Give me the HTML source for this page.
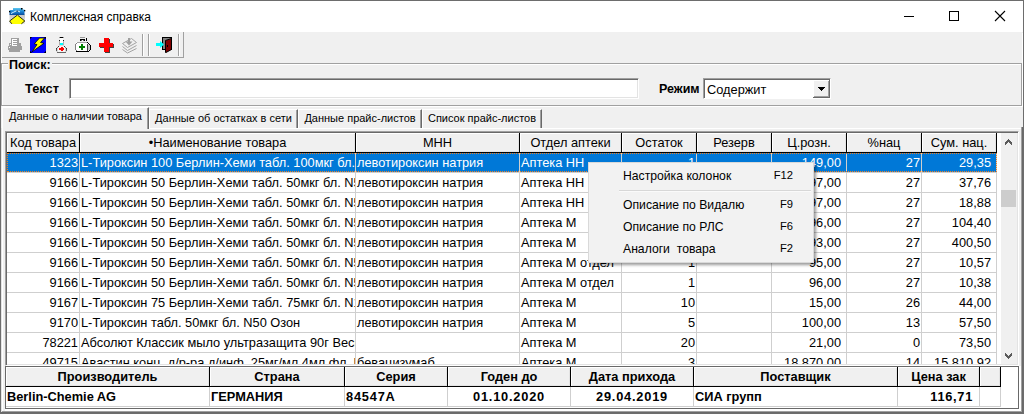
<!DOCTYPE html>
<html><head><meta charset="utf-8">
<style>
*{margin:0;padding:0;box-sizing:border-box}
html,body{width:1024px;height:414px;overflow:hidden;background:#f0f0f0;font-family:"Liberation Sans",sans-serif;color:#000}
.a{position:absolute}
.t{position:absolute;white-space:nowrap;line-height:1}
.h{position:absolute;background:#f0f0f0;border-right:1px solid #000;border-bottom:1px solid #000;box-shadow:inset 1px 1px 0 #fff, inset -1px -1px 0 #e3e3e3;font-size:12.8px;text-align:center;white-space:nowrap;overflow:hidden;color:#000}
.c{position:absolute;border-right:1px solid #cfcfcf;border-bottom:1px solid #cfcfcf;font-size:12.8px;white-space:nowrap;overflow:hidden;background:#fff}
.c span{position:absolute;top:2px}
.sel{background:#0078d7;color:#fff}
.mi{position:absolute;font-size:12.2px;white-space:nowrap;line-height:1}
.b{font-weight:bold}
</style></head><body>

<div class="a" style="left:0;top:0;width:1024px;height:414px;border:1px solid #6d6d6d"></div>
<div class="a" style="left:1px;top:128px;width:1px;height:285px;background:#e3e3e3"></div>
<div class="a" style="left:2px;top:128px;width:1px;height:283px;background:#fff"></div>
<div class="a" style="left:2px;top:128px;width:1019px;height:1px;background:#fff"></div>
<div class="a" style="left:1021px;top:127px;width:1px;height:285px;background:#a0a0a0"></div>
<div class="a" style="left:1022px;top:127px;width:1px;height:286px;background:#696969"></div>
<div class="a" style="left:2px;top:411px;width:1020px;height:1px;background:#a0a0a0"></div>
<div class="a" style="left:1px;top:412px;width:1022px;height:1px;background:#696969"></div>
<div class="a" style="left:1022px;top:33px;width:1px;height:72px;background:#fff"></div>
<div class="a" style="left:1px;top:1px;width:1022px;height:31px;background:#fff"></div>
<svg class="a" style="left:6px;top:5px" width="22" height="22" viewBox="6 5 22 22">
<defs><linearGradient id="bg1" x1="0" y1="0" x2="0" y2="1"><stop offset="0" stop-color="#5ec8f0"/><stop offset="0.55" stop-color="#1a7fd0"/><stop offset="1" stop-color="#0a4c9a"/></linearGradient>
<linearGradient id="gg1" x1="0" y1="0" x2="0" y2="1"><stop offset="0" stop-color="#c4c4c4"/><stop offset="1" stop-color="#ececec"/></linearGradient></defs>
<rect x="9.5" y="14.5" width="15.5" height="9.5" fill="url(#gg1)"/>
<path d="M9.5 10 L13 10 L13 8 L22.5 8 L22.5 9.5 L24.5 9.5 L24.5 15 L9.5 15 Z" fill="url(#bg1)"/>
<path d="M11 13.5 Q14 12 16 11 Q18 10.5 20 12" fill="none" stroke="#d8f4ff" stroke-width="1"/>
<rect x="21" y="8" width="1.5" height="1.5" fill="#000"/><rect x="9" y="11" width="1.3" height="1.3" fill="#000"/><rect x="24" y="10" width="1.3" height="1.3" fill="#000"/><rect x="16.5" y="10.5" width="1.3" height="1.3" fill="#103050"/>
<path d="M17.4 15 L25 21 L21.6 24 L11.6 24 L9.4 21 Z" fill="#ffff00"/>
<path d="M11.8 23.8 L9.6 21 L17.2 15.2 M17.6 15.2 L24.8 21 L21.4 23.8" fill="none" stroke="#111" stroke-width="0.9"/>
</svg>
<div class="t" style="left:30px;top:11px;font-size:12px;color:#000">Комплексная справка</div>
<div class="a" style="left:904px;top:16px;width:10px;height:1px;background:#000"></div>
<div class="a" style="left:949px;top:11px;width:10px;height:10px;border:1px solid #000"></div>
<svg class="a" style="left:994px;top:10px" width="12" height="12" viewBox="0 0 12 12"><path d="M1 1L11 11M11 1L1 11" stroke="#000" stroke-width="1.1"/></svg>
<div class="a" style="left:1px;top:57px;width:183px;height:1px;background:#a0a0a0"></div>
<div class="a" style="left:1px;top:32px;width:1px;height:31px;background:#fff"></div>
<div class="a" style="left:183px;top:32px;width:1px;height:26px;background:#a0a0a0"></div>
<div class="a" style="left:142px;top:34px;width:1px;height:22px;background:#a0a0a0"></div>
<div class="a" style="left:143px;top:34px;width:1px;height:22px;background:#fff"></div>
<div class="a" style="left:148px;top:34px;width:1px;height:22px;background:#a0a0a0"></div>
<div class="a" style="left:149px;top:34px;width:1px;height:22px;background:#fff"></div>
<div class="a" style="left:178px;top:34px;width:1px;height:22px;background:#a0a0a0"></div>
<div class="a" style="left:179px;top:34px;width:1px;height:22px;background:#fff"></div>
<svg class="a" style="left:0;top:32px" width="184" height="25" viewBox="0 32 184 25" shape-rendering="crispEdges">
<!-- printer disabled -->
<rect x="9" y="43" width="12" height="4" fill="#a0a0a0"/>
<rect x="8" y="46" width="14" height="4" fill="#a0a0a0"/>
<rect x="9" y="50" width="11" height="2" fill="#a0a0a0"/>
<rect x="11" y="38" width="8" height="8" fill="#a0a0a0"/>
<rect x="12" y="39" width="5" height="7" fill="#fff"/>
<rect x="13" y="40" width="4" height="1" fill="#a0a0a0"/><rect x="13" y="42" width="4" height="1" fill="#a0a0a0"/><rect x="13" y="44" width="4" height="1" fill="#a0a0a0"/>
<rect x="10" y="44" width="1" height="1" fill="#fff"/><rect x="9" y="47" width="1" height="1" fill="#fff"/>
<!-- lightning -->
<rect x="30" y="37" width="16" height="16" fill="#0000ff"/>
<rect x="30" y="37" width="1" height="1" fill="#000"/><rect x="45" y="37" width="1" height="1" fill="#000"/><rect x="30" y="52" width="1" height="1" fill="#000"/><rect x="45" y="52" width="1" height="1" fill="#000"/>
<rect x="31" y="37" width="1" height="1" fill="#000060"/><rect x="30" y="38" width="1" height="1" fill="#000060"/><rect x="44" y="37" width="1" height="1" fill="#000060"/><rect x="45" y="38" width="1" height="1" fill="#000060"/>
<rect x="30" y="51" width="1" height="1" fill="#000060"/><rect x="31" y="52" width="1" height="1" fill="#000060"/><rect x="45" y="51" width="1" height="1" fill="#000060"/><rect x="44" y="52" width="1" height="1" fill="#000060"/>
<path d="M39.5 38 L44.5 38 L40.5 42.5 L44 43.3 L32 51.8 L37 44.6 L34.3 43.8 Z" fill="#ffff00" stroke="#000" stroke-width="0.8" stroke-linejoin="round" shape-rendering="geometricPrecision"/>
<!-- flask -->
<rect x="60" y="37" width="3" height="1" fill="#000"/><rect x="59" y="37" width="1" height="1" fill="#999"/><rect x="63" y="37" width="1" height="1" fill="#999"/>
<rect x="60" y="38" width="3" height="5" fill="#fff"/>
<rect x="59" y="40" width="1" height="1" fill="#222"/><rect x="63" y="40" width="1" height="1" fill="#222"/>
<rect x="59" y="41" width="1" height="4" fill="#b0b0b0"/><rect x="63" y="41" width="1" height="4" fill="#b0b0b0"/>
<rect x="60" y="43" width="3" height="2" fill="#00ffff"/>
<path d="M59 45 L64 45 L67 48.5 L67 52 L56 52 L56 48.5 Z" fill="#d8d8d8"/>
<rect x="58" y="46" width="7" height="6" fill="#f4f4f4"/>
<rect x="58" y="46" width="1" height="1" fill="#333"/><rect x="64" y="46" width="1" height="1" fill="#333"/>
<rect x="57" y="47" width="1" height="1" fill="#777"/><rect x="65" y="47" width="1" height="1" fill="#777"/>
<rect x="56" y="48" width="1" height="1" fill="#333"/><rect x="66" y="48" width="1" height="1" fill="#333"/>
<rect x="56" y="49" width="1" height="2" fill="#555"/><rect x="66" y="49" width="1" height="2" fill="#555"/>
<rect x="59" y="48" width="5" height="2" fill="#ff0000"/><rect x="61" y="47" width="2" height="4" fill="#ff0000"/>
<rect x="57" y="52" width="9" height="1" fill="#666"/>
<!-- bag -->
<rect x="80" y="37" width="5" height="1" fill="#999"/>
<rect x="80" y="39" width="5" height="1" fill="#000"/><rect x="80" y="40" width="1" height="1" fill="#000"/><rect x="84" y="40" width="1" height="1" fill="#000"/><rect x="81" y="40" width="1" height="1" fill="#666"/><rect x="83" y="40" width="1" height="1" fill="#666"/>
<rect x="86" y="38" width="1" height="3" fill="#000"/>
<rect x="76" y="42" width="12" height="9" fill="#fff"/>
<rect x="77" y="42" width="10" height="1" fill="#a0a0a0"/><rect x="75" y="44" width="1" height="6" fill="#808080"/><rect x="76" y="43" width="1" height="1" fill="#808080"/><rect x="76" y="50" width="1" height="1" fill="#808080"/>
<rect x="76" y="51" width="13" height="1" fill="#000"/>
<rect x="87" y="42" width="1" height="1" fill="#000"/><rect x="88" y="43" width="1" height="1" fill="#000"/><rect x="89" y="44" width="1" height="1" fill="#000"/>
<rect x="90" y="45" width="1" height="5" fill="#000"/><rect x="89" y="50" width="1" height="1" fill="#000"/>
<rect x="87" y="44" width="1" height="7" fill="#404040"/><rect x="88" y="45" width="2" height="5" fill="#c8c8c8"/>
<rect x="79" y="46" width="6" height="2" fill="#008000"/><rect x="81" y="44" width="2" height="6" fill="#008000"/>
<!-- red cross -->
<rect x="109" y="39" width="1" height="13" fill="#404040"/><rect x="100" y="47" width="13" height="1" fill="#404040"/><rect x="113" y="44" width="1" height="4" fill="#404040"/><rect x="105" y="52" width="5" height="1" fill="#404040"/>
<rect x="104" y="38" width="5" height="14" fill="#ff0000"/><rect x="99" y="43" width="14" height="4" fill="#ff0000"/>
<!-- stack disabled -->
<path d="M122.5 43.5 L131.5 38.5 L136.5 42.5 L127.5 47.5 Z M122.5 46.5 L127.5 50.5 L136.5 45.5 M122.5 49.5 L127.5 53 L136.5 48.5" fill="none" stroke="#a4a4a4" stroke-width="1" shape-rendering="geometricPrecision"/>
<rect x="128" y="38" width="2" height="4" fill="#a0a0a0"/><path d="M125.5 41.5 L132.5 41.5 L129 45.5 Z" fill="#a0a0a0" shape-rendering="geometricPrecision"/>
<!-- door -->
<rect x="162" y="37" width="10" height="13" fill="#000"/>
<rect x="163" y="38" width="8" height="11" fill="#808080"/>
<path d="M165.5 40.5 L171.5 38.5 L171.5 49.5 L166 52.5 L165.5 52.5 Z" fill="#800000" stroke="#000" stroke-width="1" shape-rendering="geometricPrecision"/>
<rect x="167" y="45" width="1" height="2" fill="#000"/>
<rect x="156" y="43" width="5" height="3" fill="#00ffff"/><path d="M160 41 L164 44.5 L160 48 Z" fill="#00ffff" shape-rendering="geometricPrecision"/>
</svg>
<div class="a" style="left:1px;top:63px;width:1021px;height:43px;border:1px solid #a0a0a0;box-shadow:1px 1px 0 #fff, inset 1px 1px 0 #fff"></div>
<div class="a" style="left:8px;top:58px;width:44px;height:10px;background:#f0f0f0"></div>
<div class="t b" style="left:9px;top:59px;font-size:12.5px">Поиск:</div>
<div class="t b" style="left:25px;top:83px;font-size:12.8px">Текст</div>
<div class="a" style="left:69px;top:78px;width:570px;height:21px;background:#fff;border-top:1px solid #a0a0a0;border-left:1px solid #a0a0a0;border-right:1px solid #fff;border-bottom:1px solid #fff;box-shadow:inset 1px 1px 0 #696969, inset -1px -1px 0 #e3e3e3"></div>
<div class="t b" style="left:659px;top:83px;font-size:12.5px">Режим</div>
<div class="a" style="left:703px;top:78px;width:128px;height:21px;background:#fff;border-top:1px solid #a0a0a0;border-left:1px solid #a0a0a0;border-right:1px solid #fff;border-bottom:1px solid #fff;box-shadow:inset 1px 1px 0 #696969"></div>
<div class="t" style="left:707px;top:84px;font-size:12.8px">Содержит</div>
<div class="a" style="left:813px;top:80px;width:17px;height:18px;background:#f0f0f0;border-right:1px solid #696969;border-bottom:1px solid #696969;box-shadow:inset 1px 1px 0 #fff, inset -1px -1px 0 #a0a0a0"></div>
<svg class="a" style="left:818px;top:87px" width="8" height="5" viewBox="0 0 8 5" shape-rendering="crispEdges"><rect x="0" y="0" width="7" height="1" fill="#000"/><rect x="1" y="1" width="5" height="1" fill="#000"/><rect x="2" y="2" width="3" height="1" fill="#000"/><rect x="3" y="3" width="1" height="1" fill="#000"/></svg>
<div class="a" style="left:2px;top:128px;width:1019px;height:1px;background:#fff"></div>
<div class="a" style="left:2px;top:107px;width:147px;height:22px;background:#f0f0f0;border-left:1px solid #fff;border-top:1px solid #fff;border-right:1px solid #696969;box-shadow:inset -1px 0 0 #a0a0a0"></div>
<div class="t" style="left:2px;width:147px;text-align:center;top:111px;font-size:11px">Данные о наличии товара</div>
<div class="a" style="left:149px;top:109px;width:149px;height:19px;background:#f0f0f0;border-left:1px solid #fff;border-top:1px solid #fff;border-right:1px solid #696969;box-shadow:inset -1px 0 0 #a0a0a0"></div>
<div class="t" style="left:149px;width:149px;text-align:center;top:113px;font-size:11px">Данные об остатках в сети</div>
<div class="a" style="left:298px;top:109px;width:124px;height:19px;background:#f0f0f0;border-left:1px solid #fff;border-top:1px solid #fff;border-right:1px solid #696969;box-shadow:inset -1px 0 0 #a0a0a0"></div>
<div class="t" style="left:298px;width:124px;text-align:center;top:113px;font-size:11px">Данные прайс-листов</div>
<div class="a" style="left:422px;top:109px;width:120px;height:19px;background:#f0f0f0;border-left:1px solid #fff;border-top:1px solid #fff;border-right:1px solid #696969;box-shadow:inset -1px 0 0 #a0a0a0"></div>
<div class="t" style="left:422px;width:120px;text-align:center;top:113px;font-size:11px">Список прайс-листов</div>
<div class="a" style="left:5px;top:131px;width:1014px;height:235px;background:#fff;border-top:1px solid #a0a0a0;border-left:1px solid #a0a0a0;border-right:1px solid #fff;border-bottom:1px solid #fff;box-shadow:inset 1px 1px 0 #696969, inset -1px -1px 0 #e3e3e3"></div>
<div class="a" style="left:7px;top:133px;width:994px;height:231px;overflow:hidden">
<div class="h" style="left:0px;top:0;width:73px;height:20px;line-height:20px">Код товара</div>
<div class="h" style="left:73px;top:0;width:276px;height:20px;line-height:20px">•Наименование товара</div>
<div class="h" style="left:349px;top:0;width:164px;height:20px;line-height:20px">МНН</div>
<div class="h" style="left:513px;top:0;width:102px;height:20px;line-height:20px">Отдел аптеки</div>
<div class="h" style="left:615px;top:0;width:75px;height:20px;line-height:20px">Остаток</div>
<div class="h" style="left:690px;top:0;width:75px;height:20px;line-height:20px">Резерв</div>
<div class="h" style="left:765px;top:0;width:75px;height:20px;line-height:20px">Ц.розн.</div>
<div class="h" style="left:840px;top:0;width:75px;height:20px;line-height:20px">%нац</div>
<div class="h" style="left:915px;top:0;width:75px;height:20px;line-height:20px">Сум. нац.</div>
<div class="c sel" style="left:0px;top:20px;width:73px;height:20px"><span style="right:1px">1323</span></div>
<div class="c sel" style="left:73px;top:20px;width:276px;height:20px"><span style="left:1px">L-Тироксин 100 Берлин-Хеми табл. 100мкг бл. N100</span></div>
<div class="c sel" style="left:349px;top:20px;width:164px;height:20px"><span style="left:1px">левотироксин натрия</span></div>
<div class="c sel" style="left:513px;top:20px;width:102px;height:20px"><span style="left:1px">Аптека НН</span></div>
<div class="c sel" style="left:615px;top:20px;width:75px;height:20px"><span style="right:1px">1</span></div>
<div class="c sel" style="left:690px;top:20px;width:75px;height:20px"><span style="right:1px"></span></div>
<div class="c sel" style="left:765px;top:20px;width:75px;height:20px"><span style="right:5px">149,00</span></div>
<div class="c sel" style="left:840px;top:20px;width:75px;height:20px"><span style="right:1px">27</span></div>
<div class="c sel" style="left:915px;top:20px;width:75px;height:20px"><span style="right:5px">29,35</span></div>
<div class="c" style="left:0px;top:40px;width:73px;height:20px"><span style="right:1px">9166</span></div>
<div class="c" style="left:73px;top:40px;width:276px;height:20px"><span style="left:1px">L-Тироксин 50 Берлин-Хеми табл. 50мкг бл. N50</span></div>
<div class="c" style="left:349px;top:40px;width:164px;height:20px"><span style="left:1px">левотироксин натрия</span></div>
<div class="c" style="left:513px;top:40px;width:102px;height:20px"><span style="left:1px">Аптека НН</span></div>
<div class="c" style="left:615px;top:40px;width:75px;height:20px"><span style="right:1px">1</span></div>
<div class="c" style="left:690px;top:40px;width:75px;height:20px"><span style="right:1px"></span></div>
<div class="c" style="left:765px;top:40px;width:75px;height:20px"><span style="right:5px">97,00</span></div>
<div class="c" style="left:840px;top:40px;width:75px;height:20px"><span style="right:1px">27</span></div>
<div class="c" style="left:915px;top:40px;width:75px;height:20px"><span style="right:5px">37,76</span></div>
<div class="c" style="left:0px;top:60px;width:73px;height:20px"><span style="right:1px">9166</span></div>
<div class="c" style="left:73px;top:60px;width:276px;height:20px"><span style="left:1px">L-Тироксин 50 Берлин-Хеми табл. 50мкг бл. N50</span></div>
<div class="c" style="left:349px;top:60px;width:164px;height:20px"><span style="left:1px">левотироксин натрия</span></div>
<div class="c" style="left:513px;top:60px;width:102px;height:20px"><span style="left:1px">Аптека НН</span></div>
<div class="c" style="left:615px;top:60px;width:75px;height:20px"><span style="right:1px">1</span></div>
<div class="c" style="left:690px;top:60px;width:75px;height:20px"><span style="right:1px"></span></div>
<div class="c" style="left:765px;top:60px;width:75px;height:20px"><span style="right:5px">97,00</span></div>
<div class="c" style="left:840px;top:60px;width:75px;height:20px"><span style="right:1px">27</span></div>
<div class="c" style="left:915px;top:60px;width:75px;height:20px"><span style="right:5px">18,88</span></div>
<div class="c" style="left:0px;top:80px;width:73px;height:20px"><span style="right:1px">9166</span></div>
<div class="c" style="left:73px;top:80px;width:276px;height:20px"><span style="left:1px">L-Тироксин 50 Берлин-Хеми табл. 50мкг бл. N50</span></div>
<div class="c" style="left:349px;top:80px;width:164px;height:20px"><span style="left:1px">левотироксин натрия</span></div>
<div class="c" style="left:513px;top:80px;width:102px;height:20px"><span style="left:1px">Аптека М</span></div>
<div class="c" style="left:615px;top:80px;width:75px;height:20px"><span style="right:1px">1</span></div>
<div class="c" style="left:690px;top:80px;width:75px;height:20px"><span style="right:1px"></span></div>
<div class="c" style="left:765px;top:80px;width:75px;height:20px"><span style="right:5px">96,00</span></div>
<div class="c" style="left:840px;top:80px;width:75px;height:20px"><span style="right:1px">27</span></div>
<div class="c" style="left:915px;top:80px;width:75px;height:20px"><span style="right:5px">104,40</span></div>
<div class="c" style="left:0px;top:100px;width:73px;height:20px"><span style="right:1px">9166</span></div>
<div class="c" style="left:73px;top:100px;width:276px;height:20px"><span style="left:1px">L-Тироксин 50 Берлин-Хеми табл. 50мкг бл. N50</span></div>
<div class="c" style="left:349px;top:100px;width:164px;height:20px"><span style="left:1px">левотироксин натрия</span></div>
<div class="c" style="left:513px;top:100px;width:102px;height:20px"><span style="left:1px">Аптека М</span></div>
<div class="c" style="left:615px;top:100px;width:75px;height:20px"><span style="right:1px">1</span></div>
<div class="c" style="left:690px;top:100px;width:75px;height:20px"><span style="right:1px"></span></div>
<div class="c" style="left:765px;top:100px;width:75px;height:20px"><span style="right:5px">93,00</span></div>
<div class="c" style="left:840px;top:100px;width:75px;height:20px"><span style="right:1px">27</span></div>
<div class="c" style="left:915px;top:100px;width:75px;height:20px"><span style="right:5px">400,50</span></div>
<div class="c" style="left:0px;top:120px;width:73px;height:20px"><span style="right:1px">9166</span></div>
<div class="c" style="left:73px;top:120px;width:276px;height:20px"><span style="left:1px">L-Тироксин 50 Берлин-Хеми табл. 50мкг бл. N50</span></div>
<div class="c" style="left:349px;top:120px;width:164px;height:20px"><span style="left:1px">левотироксин натрия</span></div>
<div class="c" style="left:513px;top:120px;width:102px;height:20px"><span style="left:1px">Аптека М отдел</span></div>
<div class="c" style="left:615px;top:120px;width:75px;height:20px"><span style="right:1px">1</span></div>
<div class="c" style="left:690px;top:120px;width:75px;height:20px"><span style="right:1px"></span></div>
<div class="c" style="left:765px;top:120px;width:75px;height:20px"><span style="right:5px">95,00</span></div>
<div class="c" style="left:840px;top:120px;width:75px;height:20px"><span style="right:1px">27</span></div>
<div class="c" style="left:915px;top:120px;width:75px;height:20px"><span style="right:5px">10,57</span></div>
<div class="c" style="left:0px;top:140px;width:73px;height:20px"><span style="right:1px">9166</span></div>
<div class="c" style="left:73px;top:140px;width:276px;height:20px"><span style="left:1px">L-Тироксин 50 Берлин-Хеми табл. 50мкг бл. N50</span></div>
<div class="c" style="left:349px;top:140px;width:164px;height:20px"><span style="left:1px">левотироксин натрия</span></div>
<div class="c" style="left:513px;top:140px;width:102px;height:20px"><span style="left:1px">Аптека М отдел</span></div>
<div class="c" style="left:615px;top:140px;width:75px;height:20px"><span style="right:1px">1</span></div>
<div class="c" style="left:690px;top:140px;width:75px;height:20px"><span style="right:1px"></span></div>
<div class="c" style="left:765px;top:140px;width:75px;height:20px"><span style="right:5px">96,00</span></div>
<div class="c" style="left:840px;top:140px;width:75px;height:20px"><span style="right:1px">27</span></div>
<div class="c" style="left:915px;top:140px;width:75px;height:20px"><span style="right:5px">10,38</span></div>
<div class="c" style="left:0px;top:160px;width:73px;height:20px"><span style="right:1px">9167</span></div>
<div class="c" style="left:73px;top:160px;width:276px;height:20px"><span style="left:1px">L-Тироксин 75 Берлин-Хеми табл. 75мкг бл. N100</span></div>
<div class="c" style="left:349px;top:160px;width:164px;height:20px"><span style="left:1px">левотироксин натрия</span></div>
<div class="c" style="left:513px;top:160px;width:102px;height:20px"><span style="left:1px">Аптека М</span></div>
<div class="c" style="left:615px;top:160px;width:75px;height:20px"><span style="right:1px">10</span></div>
<div class="c" style="left:690px;top:160px;width:75px;height:20px"><span style="right:1px"></span></div>
<div class="c" style="left:765px;top:160px;width:75px;height:20px"><span style="right:5px">15,00</span></div>
<div class="c" style="left:840px;top:160px;width:75px;height:20px"><span style="right:1px">26</span></div>
<div class="c" style="left:915px;top:160px;width:75px;height:20px"><span style="right:5px">44,00</span></div>
<div class="c" style="left:0px;top:180px;width:73px;height:20px"><span style="right:1px">9170</span></div>
<div class="c" style="left:73px;top:180px;width:276px;height:20px"><span style="left:1px">L-Тироксин табл. 50мкг бл. N50 Озон</span></div>
<div class="c" style="left:349px;top:180px;width:164px;height:20px"><span style="left:1px">левотироксин натрия</span></div>
<div class="c" style="left:513px;top:180px;width:102px;height:20px"><span style="left:1px">Аптека М</span></div>
<div class="c" style="left:615px;top:180px;width:75px;height:20px"><span style="right:1px">5</span></div>
<div class="c" style="left:690px;top:180px;width:75px;height:20px"><span style="right:1px"></span></div>
<div class="c" style="left:765px;top:180px;width:75px;height:20px"><span style="right:5px">100,00</span></div>
<div class="c" style="left:840px;top:180px;width:75px;height:20px"><span style="right:1px">13</span></div>
<div class="c" style="left:915px;top:180px;width:75px;height:20px"><span style="right:5px">57,50</span></div>
<div class="c" style="left:0px;top:200px;width:73px;height:20px"><span style="right:1px">78221</span></div>
<div class="c" style="left:73px;top:200px;width:276px;height:20px"><span style="left:1px">Абсолют Классик мыло ультразащита 90г Веснушка</span></div>
<div class="c" style="left:349px;top:200px;width:164px;height:20px"><span style="left:1px"></span></div>
<div class="c" style="left:513px;top:200px;width:102px;height:20px"><span style="left:1px">Аптека М</span></div>
<div class="c" style="left:615px;top:200px;width:75px;height:20px"><span style="right:1px">20</span></div>
<div class="c" style="left:690px;top:200px;width:75px;height:20px"><span style="right:1px"></span></div>
<div class="c" style="left:765px;top:200px;width:75px;height:20px"><span style="right:5px">21,00</span></div>
<div class="c" style="left:840px;top:200px;width:75px;height:20px"><span style="right:1px">0</span></div>
<div class="c" style="left:915px;top:200px;width:75px;height:20px"><span style="right:5px">73,50</span></div>
<div class="c" style="left:0px;top:220px;width:73px;height:20px"><span style="right:1px">49715</span></div>
<div class="c" style="left:73px;top:220px;width:276px;height:20px"><span style="left:1px">Авастин конц. д/р-ра д/инф. 25мг/мл 4мл фл. N1</span></div>
<div class="c" style="left:349px;top:220px;width:164px;height:20px"><span style="left:1px">бевацизумаб</span></div>
<div class="c" style="left:513px;top:220px;width:102px;height:20px"><span style="left:1px">Аптека М</span></div>
<div class="c" style="left:615px;top:220px;width:75px;height:20px"><span style="right:1px">3</span></div>
<div class="c" style="left:690px;top:220px;width:75px;height:20px"><span style="right:1px"></span></div>
<div class="c" style="left:765px;top:220px;width:75px;height:20px"><span style="right:5px">18 870,00</span></div>
<div class="c" style="left:840px;top:220px;width:75px;height:20px"><span style="right:1px">14</span></div>
<div class="c" style="left:915px;top:220px;width:75px;height:20px"><span style="right:5px">15 810,92</span></div>
</div>
<div class="a" style="left:7px;top:153px;width:990px;height:19px;border:1px dotted #f08020"></div>
<div class="a" style="left:1001px;top:133px;width:16px;height:231px;background:#f0f0f0"></div>
<svg class="a" style="left:1005px;top:139px" width="7" height="6" viewBox="0 0 7 6" shape-rendering="crispEdges" fill="#5a5a5a"><rect x="3" y="0" width="1" height="1"/><rect x="2" y="1" width="1" height="1"/><rect x="3" y="1" width="1" height="1"/><rect x="4" y="1" width="1" height="1"/><rect x="1" y="2" width="1" height="1"/><rect x="2" y="2" width="1" height="1"/><rect x="3" y="2" width="1" height="1"/><rect x="4" y="2" width="1" height="1"/><rect x="5" y="2" width="1" height="1"/><rect x="0" y="3" width="1" height="1"/><rect x="1" y="3" width="1" height="1"/><rect x="2" y="3" width="1" height="1"/><rect x="4" y="3" width="1" height="1"/><rect x="5" y="3" width="1" height="1"/><rect x="6" y="3" width="1" height="1"/><rect x="0" y="4" width="1" height="1"/><rect x="1" y="4" width="1" height="1"/><rect x="5" y="4" width="1" height="1"/><rect x="6" y="4" width="1" height="1"/><rect x="0" y="5" width="1" height="1"/><rect x="6" y="5" width="1" height="1"/></svg>
<svg class="a" style="left:1005px;top:353px" width="7" height="6" viewBox="0 0 7 6" shape-rendering="crispEdges" fill="#5a5a5a"><rect x="3" y="5" width="1" height="1"/><rect x="2" y="4" width="1" height="1"/><rect x="3" y="4" width="1" height="1"/><rect x="4" y="4" width="1" height="1"/><rect x="1" y="3" width="1" height="1"/><rect x="2" y="3" width="1" height="1"/><rect x="3" y="3" width="1" height="1"/><rect x="4" y="3" width="1" height="1"/><rect x="5" y="3" width="1" height="1"/><rect x="0" y="2" width="1" height="1"/><rect x="1" y="2" width="1" height="1"/><rect x="2" y="2" width="1" height="1"/><rect x="4" y="2" width="1" height="1"/><rect x="5" y="2" width="1" height="1"/><rect x="6" y="2" width="1" height="1"/><rect x="0" y="1" width="1" height="1"/><rect x="1" y="1" width="1" height="1"/><rect x="5" y="1" width="1" height="1"/><rect x="6" y="1" width="1" height="1"/><rect x="0" y="0" width="1" height="1"/><rect x="6" y="0" width="1" height="1"/></svg>
<div class="a" style="left:1001px;top:190px;width:15px;height:17px;background:#cdcdcd"></div>
<div class="a" style="left:591px;top:165px;width:225px;height:100px;background:rgba(0,0,0,0.4);filter:blur(1.6px)"></div>
<div class="a" style="left:588px;top:162px;width:226px;height:101px;background:#f2f2f2;border:1px solid #d9d9d9"></div>
<div class="a" style="left:619px;top:190px;width:192px;height:1px;background:#d7d7d7"></div>
<div class="a" style="left:619px;top:191px;width:192px;height:1px;background:#fafafa"></div>
<div class="mi" style="left:623px;top:170px">Настройка колонок</div>
<div class="mi" style="left:693px;width:100px;text-align:right;top:170px;font-size:11.2px">F12</div>
<div class="mi" style="left:623px;top:199px">Описание по Видалю</div>
<div class="mi" style="left:693px;width:100px;text-align:right;top:199px;font-size:11.2px">F9</div>
<div class="mi" style="left:623px;top:221px">Описание по РЛС</div>
<div class="mi" style="left:693px;width:100px;text-align:right;top:221px;font-size:11.2px">F6</div>
<div class="mi" style="left:623px;top:243px">Аналоги&nbsp; товара</div>
<div class="mi" style="left:693px;width:100px;text-align:right;top:243px;font-size:11.2px">F2</div>
<div class="a" style="left:5px;top:366px;width:1016px;height:45px;background:#fff;border:2px solid #fff;border-left:0;border-top:0"></div>
<div class="a" style="left:5px;top:366px;width:1014px;height:43px;background:#fff;border:1px solid #696969"></div>
<div class="h b" style="left:6px;top:367px;width:204px;height:20px;line-height:19px;font-size:12.8px">Производитель</div>
<div class="c b" style="left:6px;top:387px;width:204px;height:20px"><span style="left:1px">Berlin-Chemie AG</span></div>
<div class="h b" style="left:210px;top:367px;width:135px;height:20px;line-height:19px;font-size:12.8px">Страна</div>
<div class="c b" style="left:210px;top:387px;width:135px;height:20px"><span style="left:1px">ГЕРМАНИЯ</span></div>
<div class="h b" style="left:345px;top:367px;width:103px;height:20px;line-height:19px;font-size:12.8px">Серия</div>
<div class="c b" style="left:345px;top:387px;width:103px;height:20px"><span style="left:1px;letter-spacing:0.8px">84547A</span></div>
<div class="h b" style="left:448px;top:367px;width:123px;height:20px;line-height:19px;font-size:12.8px">Годен до</div>
<div class="c b" style="left:448px;top:387px;width:123px;height:20px"><span style="left:0;right:0;text-align:center;letter-spacing:0.8px">01.10.2020</span></div>
<div class="h b" style="left:571px;top:367px;width:123px;height:20px;line-height:19px;font-size:12.8px">Дата прихода</div>
<div class="c b" style="left:571px;top:387px;width:123px;height:20px"><span style="left:0;right:0;text-align:center;letter-spacing:0.8px">29.04.2019</span></div>
<div class="h b" style="left:694px;top:367px;width:204px;height:20px;line-height:19px;font-size:12.8px">Поставщик</div>
<div class="c b" style="left:694px;top:387px;width:204px;height:20px"><span style="left:1px">СИА групп</span></div>
<div class="h b" style="left:898px;top:367px;width:82px;height:20px;line-height:19px;font-size:12.8px">Цена зак</div>
<div class="c b" style="left:898px;top:387px;width:82px;height:20px"><span style="right:6px;letter-spacing:0.7px">116,71</span></div>
<div class="h b" style="left:980px;top:367px;width:21px;height:20px;line-height:19px;font-size:12.8px"></div>
<div class="c b" style="left:980px;top:387px;width:21px;height:20px"><span style="left:1px"></span></div>
</body></html>
